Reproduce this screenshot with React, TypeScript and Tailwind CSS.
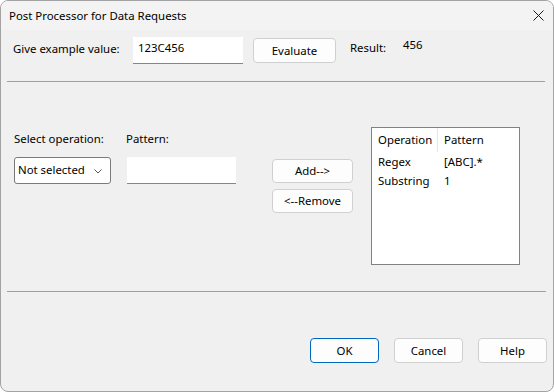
import React from "react";

const font = { fontFamily: '"Noto Sans", "Liberation Sans", sans-serif' };

function Btn({ children, w, primary }: { children: React.ReactNode; w: string; primary?: boolean }) {
  return (
    <div
      className={`${w} h-[25px] flex items-center justify-center rounded-[4px] bg-[#fdfdfd] border ${
        primary ? "border-[#0067c0]" : "border-[#d0d0d0]"
      } text-black`}
    >
      {children}
    </div>
  );
}

export default function App() {
  return (
    <div
      style={font}
      className="w-[554px] h-[392px] bg-[#f0f0f0] border border-[#a3a3a3] rounded-[8px] overflow-hidden flex flex-col text-[11.4px] leading-[16px] text-black"
    >
      {/* Title bar */}
      <div className="h-[29px] bg-[#f3f3f3] flex items-center pl-[8px] shrink-0">
        <span>Post Processor for Data Requests</span>
        <svg className="ml-auto mr-[9px]" width="11" height="11" viewBox="0 0 11 11">
          <path d="M0.5 0.5 L10.5 10.5 M10.5 0.5 L0.5 10.5" stroke="#1a1a1a" strokeWidth="1" />
        </svg>
      </div>

      {/* Row 1 */}
      <div className="mt-[7px] pl-[12px] flex items-start h-[27px]">
        <div className="w-[120px] mt-[4px]">Give example value:</div>
        <div className="w-[110px] h-[27px] bg-white border-b border-[#868686] pl-[5px] pt-[3px]">123C456</div>
        <div className="ml-[10px] mt-[1px]">
          <Btn w="w-[83px]">Evaluate</Btn>
        </div>
        <div className="ml-[14px] w-[53px] mt-[3px]">Result:</div>
        <div className="mt-0">456</div>
      </div>

      <div className="mt-[17px] ml-[6px] w-[538px] h-px bg-[#a0a0a0]" />

      {/* Middle */}
      <div className="pl-[13px] flex items-start">
        <div className="w-[112px] mt-[49px] flex flex-col">
          <div>Select operation:</div>
          <div className="mt-[10px] w-[97px] h-[27px] bg-white border border-[#7a7a7a] rounded-[3px] flex items-center pl-[3px] pb-[2px]">
            <span>Not selected</span>
            <svg className="ml-auto mr-[8px] mt-[4px]" width="8" height="5" viewBox="0 0 8 5">
              <path d="M0.5 0.5 L4 4 L7.5 0.5" fill="none" stroke="#5a5a5a" strokeWidth="1" />
            </svg>
          </div>
        </div>
        <div className="w-[146px] mt-[49px] flex flex-col">
          <div>Pattern:</div>
          <div className="mt-[10px] ml-px w-[109px] h-[27px] bg-white border-b border-[#868686]" />
        </div>
        <div className="w-[81px] mt-[77px] flex flex-col gap-[6px]">
          <div className="h-[24px] flex items-center justify-center rounded-[4px] bg-[#fdfdfd] border border-[#d0d0d0]">Add--&gt;</div>
          <div className="h-[24px] flex items-center justify-center rounded-[4px] bg-[#fdfdfd] border border-[#d0d0d0]">&lt;--Remove</div>
        </div>
        <div className="ml-[18px] mt-[45px] w-[149px] h-[138px] bg-white border border-[#828282] flex flex-col">
          <div className="flex h-[24px] items-center">
            <div className="w-[65px] pl-[6px] h-full flex items-center">Operation</div>
            <div className="w-px h-full bg-[#e5e5e5]" />
            <div className="pl-[6px]">Pattern</div>
          </div>
          {[
            ["Regex", "[ABC].*"],
            ["Substring", "1"],
          ].map(([a, b]) => (
            <div key={a} className="flex h-[19px] items-center">
              <div className="w-[66px] pl-[6px]">{a}</div>
              <div className="pl-[6px]">{b}</div>
            </div>
          ))}
        </div>
      </div>

      <div className="mt-[26px] ml-[6px] w-[539px] h-px bg-[#a0a0a0]" />

      <div className="mt-[46px] pr-[6px] flex justify-end gap-[15px]">
        <Btn w="w-[69px]" primary>OK</Btn>
        <Btn w="w-[69px]">Cancel</Btn>
        <Btn w="w-[69px]">Help</Btn>
      </div>
    </div>
  );
}
